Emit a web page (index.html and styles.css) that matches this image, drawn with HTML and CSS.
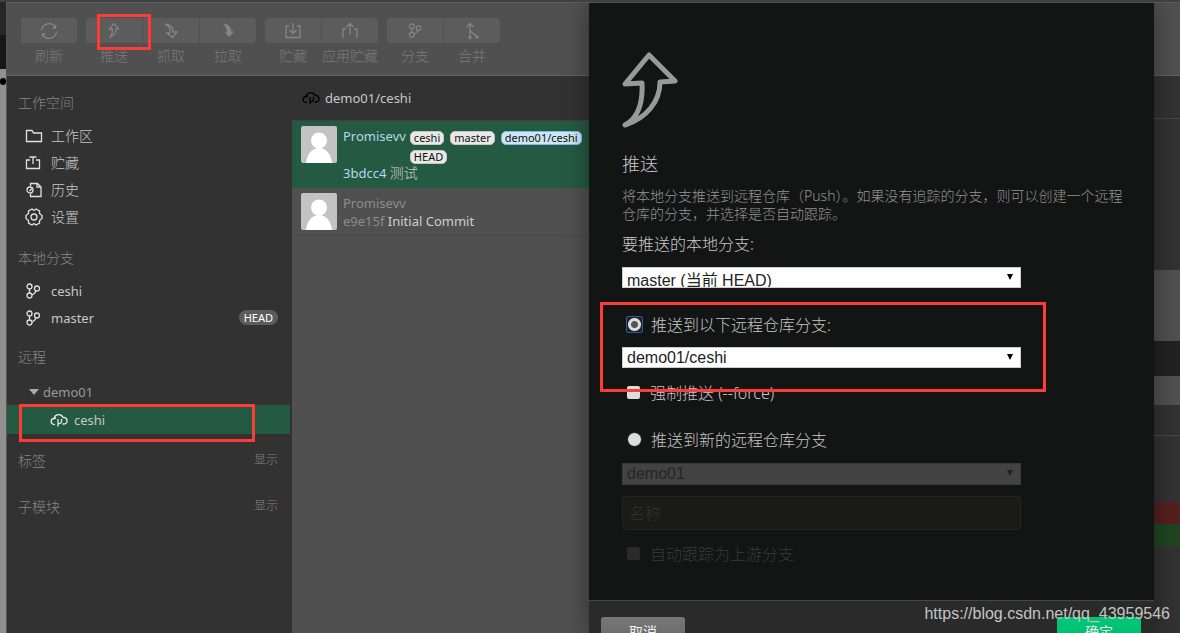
FILE: index.html
```html
<!DOCTYPE html>
<html lang="zh-CN">
<head>
<meta charset="utf-8">
<title>推送</title>
<link rel="stylesheet" href="styles.css">
</head>
<body>
<svg class="defs" aria-hidden="true">
  <symbol id="push" viewBox="0 0 56 76"><path d="M27 3 L53 29 L38 30 C38 49 25 66 3 73 C16 66 21 51 20 31 L3 32 Z"/></symbol>
  <symbol id="branch" viewBox="0 0 14 16"><circle cx="3.500" cy="3.500" r="2.500"/><circle cx="3.500" cy="12.500" r="2.500"/><circle cx="11" cy="5.500" r="2.500"/><path d="M3.500 6v4M10 8C9 10.500 8 11 6 12"/></symbol>
  <symbol id="cloud" viewBox="0 0 18 14"><path d="M5 11.500C0 12 0 6 4 5.500C5 1 11 0 13 4.500C18 4 18.500 11 14 11H12.500M8 13.500V6M8 10.500C11 11 12 9 11.500 6M4 5.500L6 5"/></symbol>
  <symbol id="avatar" viewBox="0 0 36 37"><rect width="36" height="37" rx="2" fill="#c3c3c3"/><circle cx="18" cy="14.500" r="8"/><path d="M5 37C6 27 12 22 18 22S30 27 31 37Z"/></symbol>
</svg>
<div class="app">
  <div class="edge"><span class="edge-dot"></span></div>
  <div class="window">
    <header class="toolbar">
      <div class="group"><button class="tool"><span class="tool-icon"><svg class="icon" viewBox="0 0 18 18"><path d="M1.500 8.500A7.500 7.500 0 0 1 15.500 5.500M16.500 9.500A7.500 7.500 0 0 1 2.500 12.500M15.500 3v3h-3M2.500 15v-3h3"/></svg></span>刷新</button></div>
      <div class="group">
        <button class="tool"><span class="tool-icon"><svg class="icon small thick" viewBox="0 0 56 76"><use href="#push"/></svg></span>推送</button>
        <button class="tool"><span class="tool-icon"><svg class="icon" viewBox="0 0 16 18"><path d="M2 2C8 3 10.500 6 10 10H14L9.500 15.500L4 11H7C8 7 6 4 2 2Z"/></svg></span>抓取</button>
        <button class="tool"><span class="tool-icon"><svg class="icon small solid" viewBox="0 0 14 17"><path d="M2 1C8 2 10.500 5 10 10H13L8.500 15.500L4 11H6C6.500 7 5 4 2 1Z"/></svg></span>拉取</button>
        <span class="mark mark-tool"></span>
      </div>
      <div class="group">
        <button class="tool"><span class="tool-icon"><svg class="icon" viewBox="0 0 18 18"><path d="M5 4H2V15.500H16V4H13M9 1V11M5.500 8L9 11.500L12.500 8"/></svg></span>贮藏</button>
        <button class="tool"><span class="tool-icon"><svg class="icon" viewBox="0 0 18 18"><path d="M2 16V7H5M13 7H16V16M9 13V2M5.500 5L9 1.500L12.500 5"/></svg></span>应用贮藏</button>
      </div>
      <div class="group">
        <button class="tool"><span class="tool-icon"><svg class="icon small" viewBox="0 0 14 16"><use href="#branch"/></svg></span>分支</button>
        <button class="tool"><span class="tool-icon"><svg class="icon" viewBox="0 0 18 18"><path d="M7 15V2M3.500 5L7 1.500L10.500 5M7 8C8 11 10 11 13.500 14"/><circle cx="7" cy="15.500" r="1"/><circle cx="14" cy="15" r="1"/></svg></span>合并</button>
      </div>
    </header>
    <main class="panes">
      <nav class="sidebar">
        <h2 class="section-title">工作空间</h2>
        <ul class="list">
          <li><a class="item" href="#work"><svg class="icon" viewBox="0 0 18 16"><path d="M1.500 2.500H7L8.500 5H16.500V13.500H1.500Z"/></svg>工作区</a></li>
          <li><a class="item" href="#stash"><svg class="icon" viewBox="0 0 18 16"><path d="M5 5H1.500V13.500H14.500V5H11M8 9V2M4.500 2H11.500"/></svg>贮藏</a></li>
          <li><a class="item" href="#history"><svg class="icon" viewBox="0 0 16 16"><path d="M4.500 4V1.500H11.500L15 5V14.500H4.500V12M11 1.500V5H15M3.500 9L6 6.500"/><circle cx="4" cy="8" r="3"/></svg>历史</a></li>
          <li><a class="item" href="#settings"><svg class="icon gear" viewBox="0 0 18 18"><path d="M7 1L9 2.500L11 1L14.500 3L14.500 5.500L17 7.500V10.500L14.500 12.500V15L11 17L9 15.500L7 17L3.500 15V12.500L1 10.500V7.500L3.500 5.500V3Z"/><circle cx="9" cy="9" r="3"/></svg>设置</a></li>
        </ul>
        <h2 class="section-title">本地分支</h2>
        <ul class="list">
          <li><a class="item latin" href="#ceshi"><svg class="icon" viewBox="1 0 14 16"><use href="#branch" width="14" height="16"/></svg>ceshi</a></li>
          <li><a class="item latin" href="#master"><svg class="icon" viewBox="1 0 14 16"><use href="#branch" width="14" height="16"/></svg>master<span class="head-pill">HEAD</span></a></li>
        </ul>
        <h2 class="section-title remote">远程</h2>
        <div class="tree-head latin"><span class="caret"></span>demo01</div>
        <a class="tree-item latin" href="#remote-ceshi"><svg class="icon" viewBox="0 0 18 14"><use href="#cloud"/></svg>ceshi<span class="mark mark-branch"></span></a>
        <div class="section-row"><h2>标签</h2><a href="#tags">显示</a></div>
        <div class="section-row"><h2>子模块</h2><a href="#modules">显示</a></div>
      </nav>
      <section class="commits">
        <h1 class="commits-title latin"><svg class="icon" viewBox="0 0 18 14"><use href="#cloud"/></svg>demo01/ceshi</h1>
        <article class="commit selected">
          <svg class="avatar" viewBox="0 0 36 37"><use href="#avatar"/></svg>
          <div>
            <div class="who latin">Promisevv<span class="tags"><span class="tag">ceshi</span><span class="tag">master</span><span class="tag tag-remote">demo01/ceshi</span><span class="tag">HEAD</span></span></div>
            <div class="message latin">3bdcc4 <span class="subject cjk">测试</span></div>
          </div>
        </article>
        <article class="commit">
          <svg class="avatar" viewBox="0 0 36 37"><use href="#avatar"/></svg>
          <div>
            <div class="who latin">Promisevv</div>
            <div class="message latin">e9e15f <span class="subject">Initial Commit</span></div>
          </div>
        </article>
      </section>
      <section class="details">
        <div class="strip"></div><div class="strip lined"></div><div class="strip light"></div><div class="strip dark"></div><div class="strip light"></div><div class="strip"></div><div class="strip lined"></div><div class="strip removed"></div><div class="strip added"></div>
      </section>
    </main>
  </div>
  <form class="dialog" role="dialog" aria-labelledby="dialog-title">
    <div class="dialog-body">
      <svg class="dialog-icon" viewBox="0 0 56 76"><use href="#push"/></svg>
      <h2 class="dialog-title" id="dialog-title">推送</h2>
      <p class="dialog-text">将本地分支推送到远程仓库（Push）。如果没有追踪的分支，则可以创建一个远程<br>仓库的分支，并选择是否自动跟踪。</p>
      <label class="field-label" for="local">要推送的本地分支:</label>
      <div class="select-box"><select class="select low" id="local"><option>master (当前 HEAD)</option></select></div>
      <div class="target">
        <label class="choice"><input class="radio focused" type="radio" name="target" checked>推送到以下远程仓库分支:</label>
        <div class="select-box"><select class="select" aria-label="远程仓库分支"><option>demo01/ceshi</option></select></div>
        <span class="mark mark-target"></span>
      </div>
      <label class="choice force"><input class="check" type="checkbox">强制推送 (--force)</label>
      <label class="choice fresh"><input class="radio" type="radio" name="target">推送到新的远程仓库分支</label>
      <div class="select-box disabled"><select class="select" aria-label="远程仓库" disabled><option>demo01</option></select></div>
      <input class="name-input" type="text" placeholder="名称" aria-label="名称" disabled>
      <label class="choice muted"><input class="check" type="checkbox" disabled>自动跟踪为上游分支</label>
    </div>
    <footer class="dialog-footer"><button class="button" type="button">取消</button><button class="button primary" type="button">确定</button></footer>
  </form>
  <div class="watermark">https://blog.csdn.net/qq_43959546</div>
</div>
</body>
</html>
```
FILE: styles.css
```css
* { box-sizing: border-box; }
body {
  margin: 0;
  background: #505050;
  color: #c8c8c8;
  font: 14px/20px "Noto Sans", "Noto Sans CJK SC", sans-serif;
  font-weight: 300;
}
h1, h2, p, ul { margin: 0; padding: 0; font-size: inherit; font-weight: inherit; }
ul { list-style: none; }
a { color: inherit; text-decoration: none; }
button, input, select { font: inherit; }
.latin { font-size: 13px; font-weight: 400; }
.cjk { font-size: 14px; font-weight: 300; }
.defs { position: absolute; width: 0; height: 0; }
.app { position: relative; display: flex; height: 100vh; overflow: hidden; border-top: 2px solid #3f3f3f; }
.edge { width: 7px; flex: none; padding-top: 76px; border-right: 1px solid #555; background: linear-gradient(#262626 33px, #171717 33px, #171717 67px, #909090 67px); }
.edge-dot { display: block; width: 6px; height: 7px; border-radius: 3px; background: #000; }
.window { flex: 1; min-width: 0; display: flex; flex-direction: column; }
.icon { width: 18px; height: 18px; flex: none; fill: none; stroke: currentColor; stroke-width: 1.3; }
.small { height: 15px; }
.thick { stroke-width: 6; }
.solid { fill: currentColor; stroke-width: 1; }

/* toolbar */
.toolbar { display: flex; gap: 9px; height: 74px; padding: 15px 14px 0; border-top: 1px solid #5e5e5e; border-bottom: 1px solid #646464; background: #505050; }
.group { position: relative; display: flex; gap: 1px; }
.tool { display: flex; flex-direction: column; align-items: center; gap: 3px; width: 56px; padding: 0; border: 0; background: none; color: #7a7a7a; white-space: nowrap; }
.tool-icon { display: flex; align-items: center; justify-content: center; align-self: stretch; height: 25px; background: #5c5c5c; color: #858585; }
.tool:first-child .tool-icon { border-radius: 4px 0 0 4px; }
.tool:nth-last-child(1 of .tool) .tool-icon { border-radius: 0 4px 4px 0; }
.tool:only-child .tool-icon { border-radius: 4px; }
.mark { position: absolute; border: 3px solid #ff3b37; pointer-events: none; }
.mark-tool { left: 11px; top: -4px; width: 54px; height: 36px; }

/* sidebar */
.panes { flex: 1; display: flex; min-height: 0; }
.sidebar { width: 285px; flex: none; padding-top: 17px; background: #323232; }
.section-title { padding-left: 11px; color: #858585; }
.list { padding: 9px 14px 18px 18px; }
.item { display: flex; align-items: center; gap: 8px; height: 27px; }
.item .icon { color: #e0e0e0; height: 16px; }
.item .gear { height: 18px; }
.head-pill { margin-left: auto; padding: 0 5px; border-radius: 8px; background: #5c5c5c; color: #fff; font-size: 11px; line-height: 15px; }
.remote { margin-top: -2px; }
.tree-head { display: flex; align-items: center; gap: 4px; height: 27px; margin-top: 11px; padding-left: 22px; color: #999; }
.caret { border: 5px solid transparent; border-top: 6px solid #aaa; border-bottom: 0; }
.tree-item { position: relative; display: flex; align-items: center; gap: 6px; height: 29px; margin: 0 2px 17px 0; padding-left: 43px; background: #255a42; }
.tree-item .icon { height: 14px; color: #e8e8e8; }
.mark-branch { left: 12px; right: 35px; top: -1px; height: 38px; }
.section-row { display: flex; justify-content: space-between; margin-bottom: 26px; padding: 0 14px 0 11px; color: #858585; }
.section-row a { font-size: 12px; line-height: 18px; }

/* commits */
.commits { width: 298px; flex: none; background: #505050; }
.commits-title { display: flex; align-items: center; gap: 5px; height: 45px; padding-left: 10px; border-bottom: 1px solid #404040; background: #323232; }
.commits-title .icon { height: 14px; color: #000; }
.commit { display: flex; gap: 6px; padding: 5px 9px; border-bottom: 1px solid #494949; color: #8c8c8c; line-height: 18px; }
.commit.selected { border-color: #255a42; background: #255a42; color: #b7d6e9; }
.avatar { width: 36px; height: 37px; flex: none; fill: #fff; }
.who { display: flex; gap: 4px; padding-top: 1px; }
.subject { color: #cdcdcd; }
.tags { display: flex; flex-wrap: wrap; gap: 5px 6px; width: 176px; padding-top: 4px; }
.tag { padding: 0 3px; border: 1px solid #c6c6c6; border-radius: 5px; background: #e8e8e8; color: #111; font-size: 11px; line-height: 12px; }
.tag-remote { border-color: #79bce3; background: #cde6f5; }

/* details */
.details { flex: 1; display: grid; grid-template-rows: 42px 152px 71px 35px 29px 30px 67px 22px 22px; background: #323232; }
.strip.light { background: #505050; }
.strip.dark { background: #222; }
.strip.lined { border-top: 1px solid #484848; }
.strip.removed { background: #54201f; }
.strip.added { background: #204520; }

/* dialog */
.dialog { position: absolute; left: calc(50% - 1px); right: 26px; top: 1px; bottom: 0; display: flex; flex-direction: column; background: #131414; box-shadow: 0 0 24px rgba(0, 0, 0, .4); color: #c8c8c8; font-size: 16px; }
.dialog-body { flex: 1; display: flex; flex-direction: column; padding: 49px 33px 0; }
.dialog-icon { width: 56px; height: 76px; fill: none; stroke: #999; stroke-width: 5; stroke-linejoin: round; }
.dialog-title { margin-top: 24px; font-size: 18px; line-height: 24px; }
.dialog-text { margin-top: 11px; color: #959595; font-size: 14px; line-height: 18px; white-space: nowrap; }
.field-label { margin: 11px 0 13px; line-height: 20px; }
.select-box { position: relative; width: 80%; height: 21px; }
.select-box::after { content: ""; position: absolute; right: 8px; top: 7px; border: 3px solid transparent; border-top: 6px solid #000; border-bottom: 0; }
.select { display: block; width: 100%; height: 21px; padding: 0 4px; border: 1px solid #ccc; border-radius: 0; background: #fff; color: #222; font: 16px/18px "Liberation Sans", "Noto Sans CJK SC", sans-serif; appearance: none; }
.select.low { padding-top: 4px; }
.select-box.disabled { height: 22px; margin-top: 12px; }
.select-box.disabled::after { border-top-color: #222; }
.select:disabled { height: 22px; border-color: #3a3a3a; background: #434343; color: #252525; opacity: 1; }
.target { position: relative; padding-top: 26px; }
.target .select-box { margin-top: 11px; }
.mark-target { left: -22px; right: 75px; top: 14px; height: 90px; }
.choice { display: flex; align-items: center; gap: 9px; padding-left: 5px; height: 22px; line-height: 22px; }
.radio, .check { flex: none; width: 13px; height: 13px; margin: 0 0 2px; border: 0; background: #ddd; appearance: none; }
.check { border-radius: 2px; }
.radio { width: 15px; height: 15px; border: 1px solid #131414; border-radius: 50%; }
.radio.focused { border: 0; border-radius: 1px; outline: 1px solid #2e5aa5; background: radial-gradient(circle, #555 3px, #ddd 4px, #ddd 6px, #222 7px); }
.force { margin-top: 14px; gap: 10px; }
.fresh { margin-top: 25px; }
.name-input { width: 80%; height: 34px; margin: 11px 0 13px; padding: 0 6px; border: 1px solid #232322; border-radius: 3px; background: #1a1a19; color: #333; }
.name-input::placeholder { color: #333; }
.muted { gap: 10px; color: #3a3a3a; }
.muted .check { background: #2a2a2a; }
.dialog-footer { display: flex; justify-content: space-between; align-items: flex-start; height: 33px; padding: 16px 13px 0 12px; border-top: 1px solid #464646; background: #2a2a2a; }
.button { flex: none; width: 84px; height: 30px; padding: 0; border: 0; border-radius: 3px 3px 0 0; background: linear-gradient(#777, #666); color: #f0f0f0; font-size: 14px; line-height: 24px; font-weight: 400; }
.button.primary { background: linear-gradient(#00c878, #00b86c); }
.watermark { position: absolute; right: 10px; bottom: 9px; color: #c4c4c4; font: 16px/20px "Liberation Sans", Arial, sans-serif; }
```
